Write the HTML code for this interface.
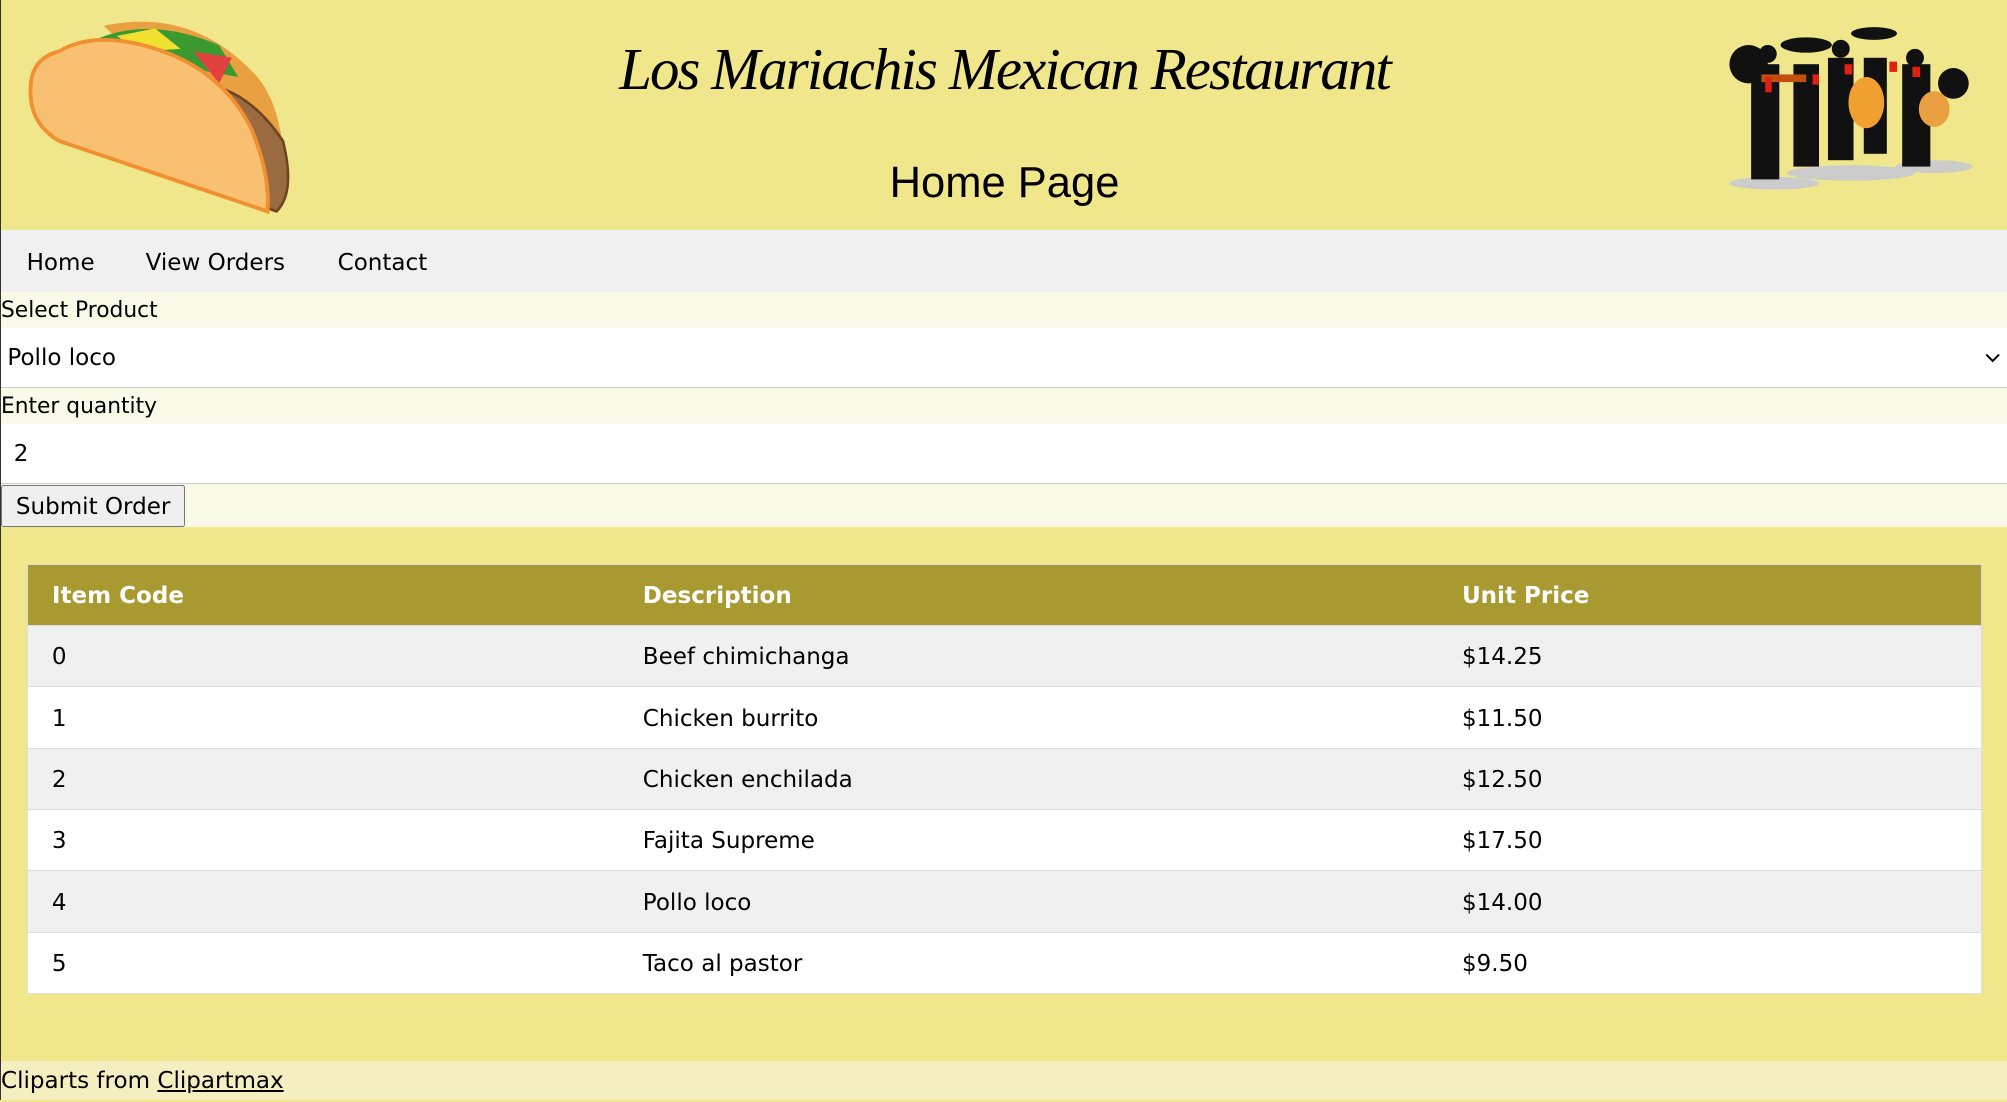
<!DOCTYPE html>
<html><head><meta charset="utf-8"><style>
html{zoom:1.28}
*{box-sizing:border-box}
body{margin:0;width:1568px;height:859px;overflow:hidden;background:#f0e68c;font-family:"DejaVu Sans","Liberation Sans",sans-serif;font-size:17px;color:#000;border-left:1px solid #333;position:relative}
.hdr{position:relative;height:180px}
.title{position:absolute;left:0;width:1568px;top:28px;text-align:center;font-family:"Liberation Serif",serif;font-style:italic;font-size:46px;letter-spacing:-1.5px}
.hp{position:absolute;left:0;width:1568px;top:124px;text-align:center;font-size:34px;font-family:"Liberation Sans",sans-serif}
.nav{height:48px;background:#f0f0f0;display:flex;align-items:center}
.nav span{position:absolute;font-size:18px;margin-top:3px}
.lbl{height:28px;background:#fafae8;line-height:30px;font-size:17px}
.fld{height:47px;background:#fff;border-bottom:1px solid #ccc;line-height:48px;font-size:18px;position:relative}
.btnrow{height:34px;background:#fafae8;position:relative}
.btn{position:absolute;left:0;top:1px;width:144px;height:33px;background:#efefef;border:1px solid #767676;border-radius:2px;font-size:18px;text-align:center;line-height:33px}
table{position:absolute;left:20px;top:441px;width:1528px;border-collapse:collapse;font-size:18px;border:1px solid #ddd}
th{background:#a89a30;color:#fff;text-align:left;height:47px;font-weight:bold;padding:2px 0 0 19px}
td{height:48px;padding:2px 0 0 19px;border-top:1px solid #ddd}
tr:nth-child(even) td{background:#f0f0f0}
tr:nth-child(odd) td{background:#fff}
.ft{position:absolute;left:0;top:829px;width:1568px;height:30px;background:#f5eec0;line-height:32px;font-size:18px}
.ft u{text-decoration:underline}
</style></head><body>
<div class="hdr">
<svg style="position:absolute;left:20px;top:10px" width="210" height="160" viewBox="0 0 210 160">
<path d="M60 10 Q130 -5 180 50 Q205 80 200 150 Z" fill="#e8a040"/>
<path d="M45 25 Q90 0 150 25 L165 50 L110 40Z" fill="#3a9a30"/>
<path d="M70 18 L100 12 L120 28 L90 30Z" fill="#f0e030"/>
<path d="M130 30 L160 35 L150 55Z" fill="#e04040"/>
<path d="M155 60 Q180 70 200 100 Q210 140 195 155 Q175 150 165 110Z" fill="#9a6a40" stroke="#6a4520" stroke-width="2"/>
<path d="M25 30 Q50 15 90 25 Q150 40 175 90 Q190 125 188 155 L25 100 Q0 85 3 55 Q5 35 25 30Z" fill="#f8c070" stroke="#f09030" stroke-width="3"/>
</svg>
<div class="title">Los Mariachis Mexican Restaurant</div>
<div class="hp">Home Page</div>
<svg style="position:absolute;left:1345px;top:10px" width="205" height="140" viewBox="0 0 205 140">
<ellipse cx="40" cy="133" rx="35" ry="5" fill="#ccc"/><ellipse cx="100" cy="125" rx="50" ry="6" fill="#ccc"/><ellipse cx="165" cy="120" rx="30" ry="5" fill="#ccc"/>
<g fill="#111">
<circle cx="20" cy="40" r="15"/><rect x="22" y="40" width="22" height="90"/><circle cx="35" cy="32" r="7"/>
<rect x="55" y="40" width="20" height="80"/><ellipse cx="65" cy="25" rx="20" ry="6"/>
<rect x="82" y="35" width="20" height="80"/><circle cx="92" cy="28" r="7"/>
<rect x="110" y="35" width="18" height="75"/><ellipse cx="118" cy="16" rx="18" ry="5"/>
<rect x="140" y="40" width="22" height="80"/><circle cx="150" cy="35" r="7"/><circle cx="180" cy="55" r="12"/>
</g>
<ellipse cx="112" cy="70" rx="14" ry="20" fill="#f0a030"/>
<ellipse cx="165" cy="75" rx="12" ry="14" fill="#e8a040"/>
<rect x="30" y="48" width="35" height="6" fill="#c05010"/>
<g fill="#e02010"><rect x="33" y="50" width="5" height="12"/><rect x="70" y="48" width="5" height="8"/><rect x="95" y="40" width="6" height="8"/><rect x="130" y="38" width="6" height="8"/><rect x="148" y="42" width="6" height="8"/></g>
</svg>
</div>
<div class="nav"><span style="left:20px">Home</span><span style="left:113px">View Orders</span><span style="left:263px">Contact</span></div>
<div class="lbl">Select Product</div>
<div class="fld"><span style="margin-left:5px">Pollo loco</span>
<svg style="position:absolute;right:5px;top:19px" width="12" height="10"><path d="M1 2 L6 7 L11 2" fill="none" stroke="#000" stroke-width="1.5"/></svg></div>
<div class="lbl">Enter quantity</div>
<div class="fld"><span style="margin-left:10px">2</span></div>
<div class="btnrow"><div class="btn">Submit Order</div></div>
<table>
<tr><th style="width:462px">Item Code</th><th style="width:640px">Description</th><th>Unit Price</th></tr>
<tr><td>0</td><td>Beef chimichanga</td><td>$14.25</td></tr>
<tr><td>1</td><td>Chicken burrito</td><td>$11.50</td></tr>
<tr><td>2</td><td>Chicken enchilada</td><td>$12.50</td></tr>
<tr><td>3</td><td>Fajita Supreme</td><td>$17.50</td></tr>
<tr><td>4</td><td>Pollo loco</td><td>$14.00</td></tr>
<tr><td>5</td><td>Taco al pastor</td><td>$9.50</td></tr>
</table>
<div class="ft">Cliparts from <u>Clipartmax</u></div>
</body></html>
